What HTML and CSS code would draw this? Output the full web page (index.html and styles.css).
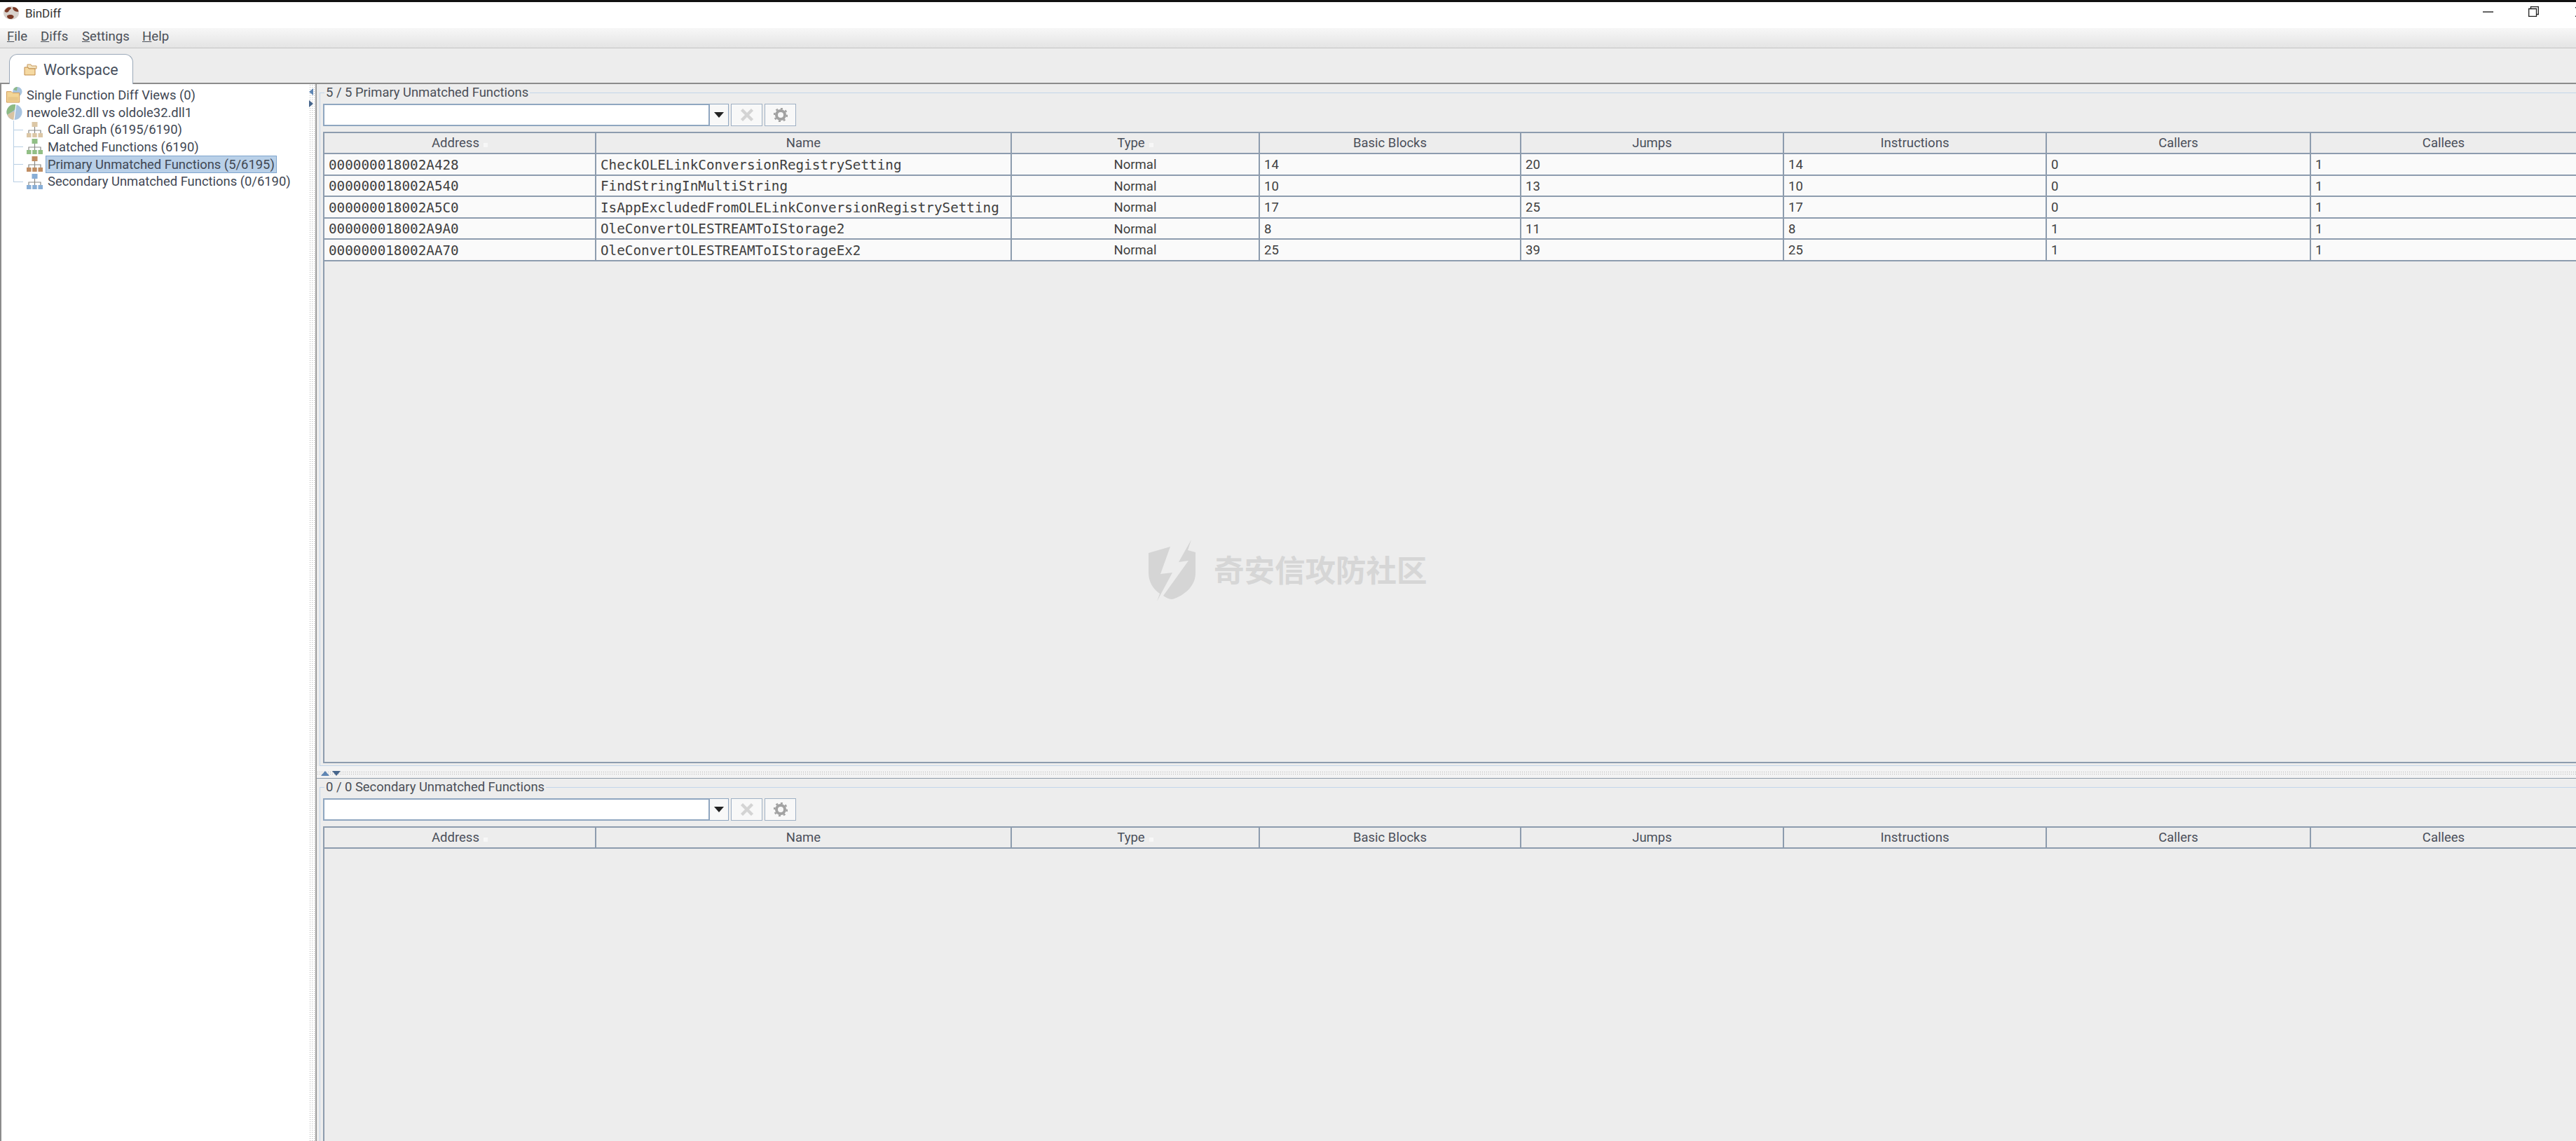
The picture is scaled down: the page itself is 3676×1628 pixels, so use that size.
FILE: index.html
```html
<!DOCTYPE html>
<html lang="en">
<head>
    <meta charset="UTF-8">
    <title>BinDiff</title>
    <link rel="stylesheet" href="styles.css">
</head>
<body>
    <svg class="defs" width="0" height="0">
        <symbol id="org" viewBox="0 0 25 24">
            <path d="M12.5 8v5M4 17v-4h17v4M12.5 13v4" fill="none" stroke="#8a8a86" stroke-width="1.2"/>
            <rect x="8.5" y="1" width="8" height="7" fill="currentColor"/>
            <rect x="1" y="17" width="6.5" height="6" fill="currentColor"/>
            <rect x="9.2" y="17" width="6.5" height="6" fill="currentColor"/>
            <rect x="17.5" y="17" width="6.5" height="6" fill="currentColor"/>
        </symbol>
    </svg>

    <div class="topline"></div>
    <div class="titlebar">
        <div class="title">
            <svg class="app-icon" viewBox="0 0 24 22">
                <ellipse cx="12" cy="11" rx="11.5" ry="10" fill="#d8d2cc"/>
                <path d="M2 8C4 3 9 1 12 3c0 3-3 3-4 6-2 2-5 1-6-1zM15 2c4 0 8 3 8 7-3 1-6-1-8-3-1-2-1-3 0-4zM6 15c3-2 7-2 9 0 2 2 0 5-4 5-3 0-6-2-5-5z" fill="#7b3a26"/>
            </svg>
            <span>BinDiff</span>
        </div>
        <div class="window-btns">
            <svg class="win-min" viewBox="0 0 15 2"><path d="M0 1h15" stroke="#222" stroke-width="1.4"/></svg>
            <svg class="win-restore" viewBox="0 0 15 15"><path d="M3.5 3.5V.7h10.8v10.8h-2.800M.7 3.500h10.800v10.800H.7z" fill="none" stroke="#222" stroke-width="1.300"/></svg>
            <svg class="win-close" viewBox="0 0 14 14"><path d="M0 0l14 14M14 0L0 14" stroke="#222" stroke-width="1.300"/></svg>
        </div>
    </div>
    <div class="menubar">
        <span class="menu menu-file"><u>F</u>ile</span>
        <span class="menu menu-diffs"><u>D</u>iffs</span>
        <span class="menu menu-settings"><u>S</u>ettings</span>
        <span class="menu"><u>H</u>elp</span>
    </div>
    <div class="tabstrip">
        <div class="tab">
            <svg class="tab-icon" viewBox="0 0 20 17">
                <path d="M5 1h5l1 2h7v4H5z" fill="#f3e3c0" stroke="#c89a5c"/>
                <path d="M1 5h5l1 2h9v9H1z" fill="#f5d9a2" stroke="#c08a48"/>
            </svg>
            <span>Workspace</span>
        </div>
    </div>

    <div class="main">
        <div class="tree">
            <div class="tree-row">
                <svg class="icon-root" viewBox="0 0 25 25">
                    <circle cx="17" cy="8" r="7" fill="#a9c4de"/>
                    <path d="M17 1a7 7 0 0 0-6 4l5 2z" fill="#8fb98a"/>
                    <path d="M1 8h7l2 2h10v14H1z" fill="#f3d596" stroke="#d09a55"/>
                    <path d="M3 16h15v6H3z" fill="#e8c689"/>
                </svg>
                <span>Single Function Diff Views (0)</span>
            </div>
            <div class="tree-row">
                <svg class="icon-root" viewBox="0 0 25 25">
                    <circle cx="12.500" cy="12.500" r="11.500" fill="#a9c4e0"/>
                    <path d="M12.500 1A11.500 11.500 0 0 0 1 12.500c0 2 .5 3 1 4L13 9c2-3 2-6 1-8z" fill="#8dba83"/>
                    <path d="M2 16.500A11.500 11.500 0 0 0 12 24c2-3 2-8 0-13z" fill="#d8c3a2"/>
                    <path d="M15 1l-3 23" stroke="#fff" stroke-width="1.200"/>
                </svg>
                <span>newole32.dll vs oldole32.dll1</span>
            </div>
            <div class="tree-row child">
                <svg class="icon-org org-tan"><use href="#org"/></svg>
                <span>Call Graph (6195/6190)</span>
            </div>
            <div class="tree-row child">
                <svg class="icon-org org-green"><use href="#org"/></svg>
                <span>Matched Functions (6190)</span>
            </div>
            <div class="tree-row child">
                <svg class="icon-org org-brown"><use href="#org"/></svg>
                <span class="selected">Primary Unmatched Functions (5/6195)</span>
            </div>
            <div class="tree-row child last">
                <svg class="icon-org org-blue"><use href="#org"/></svg>
                <span>Secondary Unmatched Functions (0/6190)</span>
            </div>
        </div>

        <div class="vsplit">
            <i class="arrow-left"></i>
            <i class="arrow-right"></i>
        </div>

        <div class="content">
            <fieldset class="group group-top">
                <legend>5 / 5 Primary Unmatched Functions</legend>
                <div class="filter">
                    <div class="filter-input"></div>
                    <div class="filter-drop"><i></i></div>
                    <div class="filter-btn">
                        <svg viewBox="0 0 16 16"><path d="M2 2l12 12M14 2L2 14" stroke="#d4d4d4" stroke-width="3.500"/></svg>
                    </div>
                    <div class="filter-btn">
                        <svg viewBox="0 0 20 20"><circle cx="10" cy="10" r="6" fill="none" stroke="#a2a2a2" stroke-width="4"/><circle cx="10" cy="10" r="9" fill="none" stroke="#a2a2a2" stroke-width="2.500" stroke-dasharray="3 4"/></svg>
                    </div>
                </div>
                <div class="table-box">
                    <table>
                        <colgroup>
                            <col class="c-addr"><col class="c-name"><col class="c-type"><col class="c-bb"><col class="c-num"><col class="c-num"><col class="c-callers"><col>
                        </colgroup>
                        <thead>
                            <tr>
                                <th>Address<i class="sort"></i></th>
                                <th>Name</th>
                                <th>Type<i class="sort"></i></th>
                                <th>Basic Blocks</th>
                                <th>Jumps</th>
                                <th>Instructions</th>
                                <th>Callers</th>
                                <th>Callees</th>
                            </tr>
                        </thead>
                        <tbody>
                            <tr><td class="mono">000000018002A428</td><td class="mono">CheckOLELinkConversionRegistrySetting</td><td class="center">Normal</td><td>14</td><td>20</td><td>14</td><td>0</td><td>1</td></tr>
                            <tr><td class="mono">000000018002A540</td><td class="mono">FindStringInMultiString</td><td class="center">Normal</td><td>10</td><td>13</td><td>10</td><td>0</td><td>1</td></tr>
                            <tr><td class="mono">000000018002A5C0</td><td class="mono">IsAppExcludedFromOLELinkConversionRegistrySetting</td><td class="center">Normal</td><td>17</td><td>25</td><td>17</td><td>0</td><td>1</td></tr>
                            <tr><td class="mono">000000018002A9A0</td><td class="mono">OleConvertOLESTREAMToIStorage2</td><td class="center">Normal</td><td>8</td><td>11</td><td>8</td><td>1</td><td>1</td></tr>
                            <tr><td class="mono">000000018002AA70</td><td class="mono">OleConvertOLESTREAMToIStorageEx2</td><td class="center">Normal</td><td>25</td><td>39</td><td>25</td><td>1</td><td>1</td></tr>
                        </tbody>
                    </table>
                </div>
            </fieldset>

            <div class="hsplit">
                <i class="arrow-up"></i>
                <i class="arrow-down"></i>
            </div>

            <fieldset class="group group-bottom">
                <legend>0 / 0 Secondary Unmatched Functions</legend>
                <div class="filter">
                    <div class="filter-input"></div>
                    <div class="filter-drop"><i></i></div>
                    <div class="filter-btn">
                        <svg viewBox="0 0 16 16"><path d="M2 2l12 12M14 2L2 14" stroke="#d4d4d4" stroke-width="3.500"/></svg>
                    </div>
                    <div class="filter-btn">
                        <svg viewBox="0 0 20 20"><circle cx="10" cy="10" r="6" fill="none" stroke="#a2a2a2" stroke-width="4"/><circle cx="10" cy="10" r="9" fill="none" stroke="#a2a2a2" stroke-width="2.500" stroke-dasharray="3 4"/></svg>
                    </div>
                </div>
                <div class="table-box">
                    <table>
                        <colgroup>
                            <col class="c-addr"><col class="c-name"><col class="c-type"><col class="c-bb"><col class="c-num"><col class="c-num"><col class="c-callers"><col>
                        </colgroup>
                        <thead>
                            <tr>
                                <th>Address<i class="sort"></i></th>
                                <th>Name</th>
                                <th>Type<i class="sort"></i></th>
                                <th>Basic Blocks</th>
                                <th>Jumps</th>
                                <th>Instructions</th>
                                <th>Callers</th>
                                <th>Callees</th>
                            </tr>
                        </thead>
                    </table>
                </div>
            </fieldset>
        </div>
    </div>

    <!-- watermark over the table area -->
    <div class="watermark">
        <svg viewBox="0 0 70 88">
            <path d="M32 10L1 19V47C1 60 7 70 17 77L13 88L35 47L18 49Z" fill="#d5d5d5"/>
            <path d="M62 0L44 32L58 30L22 80C26 83 31 85 35 85C52 80 68 66 68 48V18L57 15Z" fill="#d5d5d5"/>
        </svg>
        <span>奇安信攻防社区</span>
    </div>
</body>
</html>
```

FILE: styles.css
```css
html, body {
    margin: 0;
    height: 100%;
    overflow: hidden;
}

body {
    display: flex;
    flex-direction: column;
    background-color: #ededed;
    color: #3f4753;
    font-family: Roboto, "Liberation Sans", sans-serif;
    font-size: 18px;
}

.defs {
    position: absolute;
}

.topline {
    height: 3px;
    background-color: #111;
    flex-shrink: 0;
}

.titlebar {
    height: 37px;
    background-color: #fff;
    display: flex;
    align-items: center;
    flex-shrink: 0;
}

.title {
    flex: 1;
    display: flex;
    align-items: center;
    padding: 0 0 6px 4px;
    font-size: 17px;
    color: #333;
}

.app-icon {
    width: 24px;
    height: 21px;
    margin-right: 8px;
}

.window-btns {
    width: 133px;
    flex-shrink: 0;
    display: flex;
    align-items: center;
    overflow: hidden;
    padding-bottom: 10px;
}

.win-min {
    width: 15px;
    height: 2px;
    flex-shrink: 0;
}

.win-restore {
    width: 15px;
    height: 15px;
    flex-shrink: 0;
    margin-left: 50px;
}

.win-close {
    width: 14px;
    height: 14px;
    flex-shrink: 0;
    margin-left: 52px;
}

.menubar {
    height: 29px;
    box-sizing: border-box;
    flex-shrink: 0;
    display: flex;
    align-items: center;
    padding: 0 0 4px 10px;
    background: linear-gradient(#f7f7f7, #e4e4e4);
    border-bottom: 1px solid #c4c4c4;
    font-size: 18.6px;
    color: #4a4f57;
}

.menu-file {
    width: 48px;
}

.menu-diffs {
    width: 59px;
}

.menu-settings {
    width: 86px;
}

.tabstrip {
    height: 49px;
    flex-shrink: 0;
    display: flex;
    align-items: flex-end;
    padding-left: 13px;
    border-bottom: 2px solid #8c8c8c;
}

.tab {
    width: 177px;
    height: 43px;
    box-sizing: border-box;
    margin-bottom: -2px;
    display: flex;
    align-items: center;
    padding-left: 20px;
    background-color: #fff;
    border: 1px solid #9aa8b8;
    border-bottom: none;
    border-radius: 12px 12px 0 0;
    font-size: 21.5px;
    color: #4a5260;
}

.tab-icon {
    width: 20px;
    height: 17px;
    margin-right: 8px;
}

.main {
    flex: 1;
    display: flex;
    min-height: 0;
}

.tree {
    width: 439px;
    flex-shrink: 0;
    padding-top: 3px;
    background-color: #fff;
    border-left: 2px solid #8c8c8c;
    font-size: 18.4px;
}

.tree-row {
    position: relative;
    height: 24.7px;
    display: flex;
    align-items: center;
    padding-left: 6px;
    white-space: nowrap;
}

.tree-row.child {
    padding-left: 35px;
}

.tree-row.child::before {
    content: "";
    position: absolute;
    left: 17px;
    width: 14px;
    top: 50%;
    border-top: 1px solid #b8cfe4;
}

.tree-row.child::after {
    content: "";
    position: absolute;
    left: 17px;
    top: 0;
    bottom: 0;
    border-left: 1px solid #b8cfe4;
}

.tree-row.last::after {
    bottom: 50%;
}

.icon-root {
    width: 25px;
    height: 24px;
    margin-right: 5px;
}

.icon-org {
    width: 25px;
    height: 24px;
    margin-right: 6px;
}

.org-tan {
    color: #dcc7a6;
}

.org-green {
    color: #92bf86;
}

.org-brown {
    color: #c08d62;
}

.org-blue {
    color: #88aed6;
}

.selected {
    background-color: #b9d0e8;
    outline: 1px solid #7fa6cf;
    padding: 1px 2px;
    margin-left: -2px;
}

.vsplit {
    width: 11px;
    flex-shrink: 0;
    display: flex;
    flex-direction: column;
    box-sizing: border-box;
    padding-top: 6px;
    gap: 7px;
    background-color: #fff;
    background-image: radial-gradient(#b0b0b0 40%, transparent 45%);
    background-size: 3px 3px;
    border-right: 2px solid #9a9a9a;
}

.arrow-left,
.arrow-right {
    width: 0;
    height: 0;
    border-top: 5px solid transparent;
    border-bottom: 5px solid transparent;
}

.arrow-left {
    border-right: 6px solid #5f86b4;
}

.arrow-right {
    border-left: 6px solid #47668c;
}

.content {
    flex: 1;
    min-width: 0;
    display: flex;
    flex-direction: column;
    overflow: hidden;
    padding-left: 4px;
}

.group {
    margin: 0;
    padding: 4px 0 0 4px;
    min-width: 0;
    box-sizing: border-box;
    border: 1px solid #c3d6ea;
    border-right: none;
}

.group legend {
    margin-left: 2px;
    padding: 0 2px;
    height: 24px;
    line-height: 24px;
    font-size: 18.4px;
    color: #4a4f57;
}

.group-top {
    height: 973px;
    flex-shrink: 0;
}

.group-bottom {
    flex: 1;
    border-bottom: none;
    min-height: 0;
}

.hsplit {
    height: 18px;
    flex-shrink: 0;
    margin-left: -4px;
    box-sizing: border-box;
    display: flex;
    align-items: center;
    gap: 4px;
    padding: 3px 0 0 6px;
    background-image:
        radial-gradient(#b4b4b4 40%, transparent 45%),
        radial-gradient(#b4b4b4 40%, transparent 45%);
    background-size: 3px 3px;
    background-position: 0 7px, 0 10px;
    background-repeat: repeat-x;
    background-color: #f3f3f3;
    border-bottom: 1px solid #8d9aa8;
}

.arrow-up,
.arrow-down {
    width: 0;
    height: 0;
    border-left: 6px solid transparent;
    border-right: 6px solid transparent;
}

.arrow-up {
    border-bottom: 7px solid #5f86b4;
}

.arrow-down {
    border-top: 7px solid #47668c;
}

.filter {
    display: flex;
    height: 32px;
    margin-bottom: 8px;
}

.filter-input {
    width: 552px;
    box-sizing: border-box;
    background-color: #fff;
    border: 2px solid #8fa6c0;
}

.filter-drop {
    width: 27px;
    display: flex;
    align-items: center;
    justify-content: center;
    box-sizing: border-box;
    background-color: #f8f8f8;
    border: 1px solid #8fa6c0;
    border-left: none;
}

.filter-drop i {
    border-left: 7px solid transparent;
    border-right: 7px solid transparent;
    border-top: 8px solid #222;
}

.filter-btn {
    width: 45px;
    margin-left: 3px;
    display: flex;
    align-items: center;
    justify-content: center;
    box-sizing: border-box;
    background-color: #f8f8f8;
    border: 1px solid #9fb0c4;
}

.filter-btn svg {
    width: 20px;
    height: 20px;
}

.table-box {
    height: 901px;
    box-sizing: border-box;
    border: 2px solid #8d9cae;
    border-right: none;
}

.group-bottom .table-box {
    height: 460px;
    border-bottom: none;
}

table {
    width: 100%;
    table-layout: fixed;
    border-collapse: separate;
    border-spacing: 0;
}

.c-addr {
    width: 388px;
}

.c-name {
    width: 593px;
}

.c-type {
    width: 354px;
}

.c-bb {
    width: 373px;
}

.c-num {
    width: 375px;
}

.c-callers {
    width: 377px;
}

th {
    height: 30px;
    padding: 0;
    box-sizing: border-box;
    font-weight: 400;
    text-align: center;
    font-size: 18.5px;
    color: #4a4f5a;
    background-color: #ededed;
    border-right: 2px solid #8d9cae;
    border-bottom: 2px solid #8d9cae;
}

th:last-child,
td:last-child {
    border-right: none;
}

.sort {
    display: inline-block;
    width: 6px;
    height: 6px;
    margin-left: 6px;
    background-color: #f7f7f7;
}

td {
    height: 30.5px;
    padding: 2px 0 0 6px;
    box-sizing: border-box;
    font-size: 18.5px;
    color: #404040;
    background-color: #fafafa;
    border-right: 2px solid #8d9cae;
    border-bottom: 2px solid #8d9cae;
    white-space: nowrap;
    overflow: hidden;
}

.mono {
    font-family: "DejaVu Sans Mono", "Liberation Mono", monospace;
    font-size: 19.3px;
}

.center {
    text-align: center;
    padding-left: 0;
}

.watermark {
    position: absolute;
    left: 1638px;
    top: 770px;
    display: flex;
    align-items: center;
    gap: 24px;
    color: #d6d6d6;
    font-family: "Noto Sans CJK SC", sans-serif;
    font-size: 43.5px;
    font-weight: 700;
    line-height: 1;
}

.watermark span {
    margin-top: -4px;
}

.watermark svg {
    width: 70px;
    height: 88px;
}
```
